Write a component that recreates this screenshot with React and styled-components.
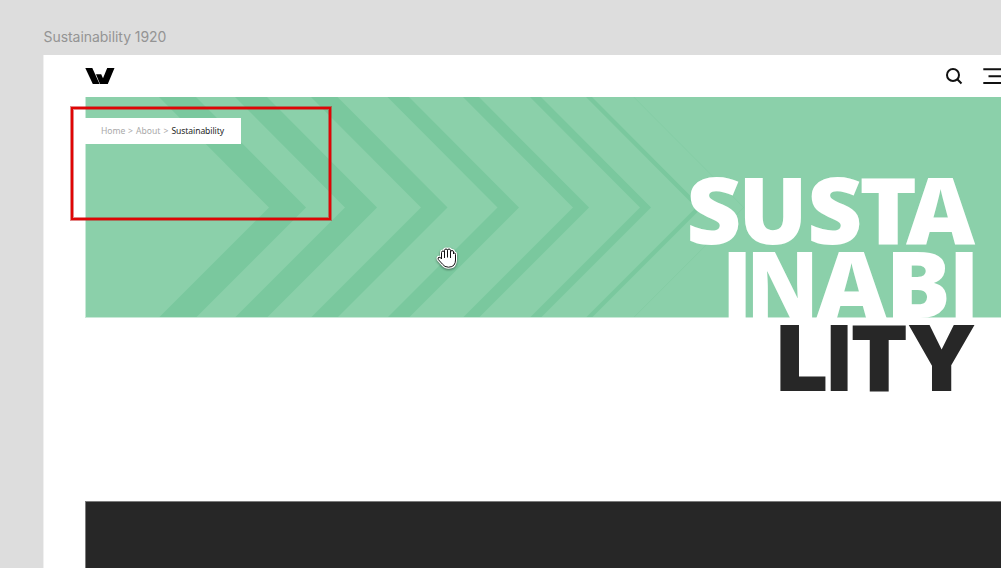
import React from 'react';
import styled, { createGlobalStyle } from 'styled-components';

const GlobalStyle = createGlobalStyle`
  * {
    box-sizing: border-box;
  }

  body {
    margin: 0;
    overflow: hidden;
    background: #dddddd;
  }
`;

// Canvas
const Canvas = styled.div`
  position: relative;
  display: flex;
  flex-direction: column;
  height: 100vh;
  padding-left: 43px;
  overflow: hidden;
`;

const FrameName = styled.div`
  flex: none;
  height: 55px;
  padding: 28px 0 0 0.5px;
  color: #949494;
  font: 400 14px/18px Inter, sans-serif;
  letter-spacing: -0.05px;
`;

const Frame = styled.div`
  display: flex;
  flex: 1;
  flex-direction: column;
  border-left: 1px solid #f0f0f0;
  background: #fff;
`;

// Header
const Header = styled.header`
  display: flex;
  flex: none;
  align-items: center;
  justify-content: space-between;
  height: 42px;
  padding-left: 41px;
`;

const Tools = styled.div`
  display: flex;
  align-items: center;
  gap: 20px;
`;

// Hero
const Hero = styled.section`
  position: relative;
  flex: none;
  height: 221px;
  margin-left: 41px;
  border: solid #c8e9d7;
  border-width: 0 0 1px 1px;
  background: #8bd0aa;
`;

const Chevrons = styled.svg`
  position: absolute;
  top: 0;
  left: 0;
`;

const Breadcrumb = styled.nav`
  position: relative;
  top: 21px;
  display: flex;
  align-items: center;
  width: 155.5px;
  height: 26px;
  margin-left: -1px;
  padding-left: 16px;
  background: #fff;
`;

const Crumb = styled.span`
  width: ${({ $width }) => $width}px;
  color: ${({ $active }) => ($active ? '#262626' : '#a9a9a9')};
  font: 400 8.6px/12px 'Noto Sans', sans-serif;
  letter-spacing: ${({ $active }) => ($active ? -0.1 : 0)}px;
  white-space: nowrap;
`;

const Title = styled.h1`
  position: absolute;
  top: 74.5px;
  right: 26px;
  margin: 0;
  font: 800 92.5px/73.5px 'Open Sans', sans-serif;
  text-align: right;
  white-space: nowrap;
`;

const TitleLine = styled.span`
  display: block;
  color: ${({ $dark }) => ($dark ? '#272727' : '#fff')};

  &:nth-child(2) {
    padding-top: 1px;
    margin-bottom: -1px;
  }
`;

const Letter = styled.span`
  display: inline-block;
  margin-right: ${({ $gap }) => $gap}px;
  transform: scaleX(${({ $stretch }) => $stretch});
`;

const DarkBlock = styled.section`
  flex: 1;
  margin: 183px 0 0 41px;
  border: solid #7c7c7c;
  border-width: 1px 0 0 1px;
  background: #272727;
`;

// Overlays
const Marker = styled.div`
  position: absolute;
  top: 107px;
  left: 71px;
  width: 260px;
  height: 113px;
  border: 2px solid #df0505;
  box-shadow: 0 0 0 1px rgba(200, 20, 20, 0.5), inset 0 0 0 1px rgba(200, 20, 20, 0.5);
`;

const Cursor = styled.svg`
  position: absolute;
  top: 244px;
  left: 433.5px;
  filter: drop-shadow(0 1px 1px rgba(0, 0, 0, 0.45));
`;

// x of the notch, thickness
const chevrons = [
  [183, 37],
  [259, 32],
  [335, 26.5],
  [411.5, 21.5],
  [487, 16],
  [554, 11],
  [610, 6],
  [657.5, 0.4],
];

const crumbs = [
  { text: 'Home', width: 27 },
  { text: '>', width: 8 },
  { text: 'About', width: 27.5 },
  { text: '>', width: 8 },
  { text: 'Sustainability', active: true },
];

// letter, gap after it, stretch
const lines = [
  {
    letters: [['S', -2.5, 1.04], ['U', 0, 0.99], ['S', -1, 1.04], ['T', -8.5, 1.06], ['A', 1, 1.03]],
  },
  {
    letters: [['I', -9, 0.94], ['N', -3, 0.94], ['A', 2, 1.05], ['B', -2, 1.05], ['I', -5, 0.94]],
  },
  {
    dark: true,
    letters: [['L', -4.5, 1.04], ['I', -3, 0.94], ['T', 4, 1.06], ['Y', 2.5, 1.07]],
  },
];

// App
function App() {
  return (
    <Canvas>
      <GlobalStyle />
      <FrameName>Sustainability 1920</FrameName>
      <Frame>
        <Header>
          <svg width="30" height="16" viewBox="0 0 30 16">
            <path d="M.3 0h7l7.300 16H7.800z" />
            <path d="M11 6.300h5.200l1.800 4L22.200 0h7.300L22.800 16H15z" />
          </svg>
          <Tools>
            <svg width="18" height="18" viewBox="0 0 18 18" fill="none" stroke="#111" strokeWidth="2">
              <circle cx="8" cy="8" r="6" />
              <path d="M12.300 12.300l4.200 4.200" />
            </svg>
            <svg width="18" height="16" viewBox="0 0 18 16" stroke="#111" strokeWidth="2">
              <path d="M.3 1.200h18M5.500 8.200h13M.3 15h18" />
            </svg>
          </Tools>
        </Header>
        <Hero>
          <Chevrons width="915" height="220" viewBox="0 0 915 220">
            {chevrons.map(([x, w]) => (
              <path
                key={x}
                fill="#7ac89e"
                d={`M${x - 110} 0h${w}L${x + w} 110.500 ${x + w - 110} 220.500h${-w}L${x} 110.500z`}
              />
            ))}
          </Chevrons>
          <Breadcrumb>
            {crumbs.map((c, i) => (
              <Crumb key={i} $width={c.width} $active={c.active}>
                {c.text}
              </Crumb>
            ))}
          </Breadcrumb>
          <Title>
            {lines.map((line, i) => (
              <TitleLine key={i} $dark={line.dark}>
                {line.letters.map(([char, gap, stretch], j) => (
                  <Letter key={j} $gap={gap} $stretch={stretch}>
                    {char}
                  </Letter>
                ))}
              </TitleLine>
            ))}
          </Title>
        </Hero>
        <DarkBlock />
      </Frame>
      <Marker />
      <Cursor width="26" height="28" viewBox="0 0 26 28">
        <path
          d="M7.500 15V8.500Q7.500 7 9 7t1.500 1.500V6.500Q10.500 5 12 5t1.500 1.500Q13.500 5 15 5t1.500 1.500V8q0-1.500 1.500-1.500T19.500 8v2q0-1 1-1t1 1.500V16q0 3-1.500 5t-5.500 2.200q-4 0-6-3L4.300 15.500q-.8-2 .7-2.300T7.500 15z"
          fill="#fff"
          stroke="#fff"
          strokeWidth="3"
          strokeLinejoin="round"
        />
        <path
          d="M7.500 15V8.500Q7.500 7 9 7t1.500 1.500V6.500Q10.500 5 12 5t1.500 1.500Q13.500 5 15 5t1.500 1.500V8q0-1.500 1.500-1.500T19.500 8v2q0-1 1-1t1 1.500V16q0 3-1.500 5t-5.500 2.200q-4 0-6-3L4.300 15.500q-.8-2 .7-2.300T7.500 15z"
          fill="#fff"
          stroke="#111"
        />
        <path d="M10.500 8v6M13.500 6.500v7M16.500 8v6" stroke="#111" fill="none" />
      </Cursor>
    </Canvas>
  );
}

export default App;
